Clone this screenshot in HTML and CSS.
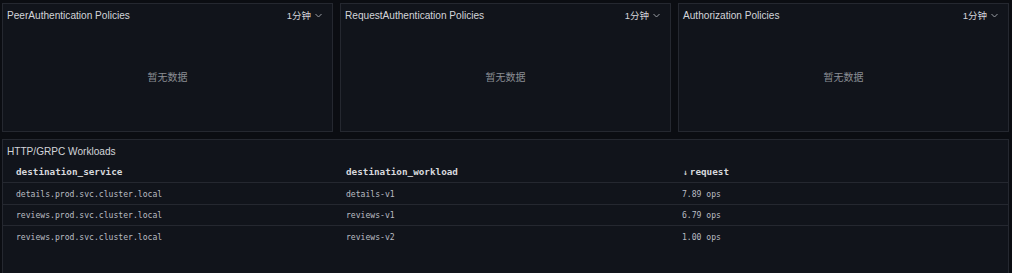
FILE: index.html
```html
<!DOCTYPE html>
<html lang="zh-CN">
<head>
    <meta charset="UTF-8">
    <meta name="viewport" content="width=device-width, initial-scale=1.0">
    <title>Istio Security Dashboard</title>
    <link rel="stylesheet" href="styles.css">
</head>
<body>
    <div class="dashboard">
        <div class="row-policies">
            <div class="panel">
                <div class="panel-head">
                    <span class="panel-title">PeerAuthentication Policies</span>
                    <span class="interval">1分钟
                        <svg class="chevron" width="7" height="5" viewBox="0 0 7 5"><polyline points="0.5,1 3.5,4 6.5,1" fill="none" stroke="currentColor" stroke-width="1"/></svg>
                    </span>
                </div>
                <div class="empty">暂无数据</div>
            </div>
            <div class="panel">
                <div class="panel-head">
                    <span class="panel-title">RequestAuthentication Policies</span>
                    <span class="interval">1分钟
                        <svg class="chevron" width="7" height="5" viewBox="0 0 7 5"><polyline points="0.5,1 3.5,4 6.5,1" fill="none" stroke="currentColor" stroke-width="1"/></svg>
                    </span>
                </div>
                <div class="empty">暂无数据</div>
            </div>
            <div class="panel">
                <div class="panel-head">
                    <span class="panel-title">Authorization Policies</span>
                    <span class="interval">1分钟
                        <svg class="chevron" width="7" height="5" viewBox="0 0 7 5"><polyline points="0.5,1 3.5,4 6.5,1" fill="none" stroke="currentColor" stroke-width="1"/></svg>
                    </span>
                </div>
                <div class="empty">暂无数据</div>
            </div>
        </div>

        <div class="panel panel-wide">
            <div class="panel-head wide-head">
                <span class="panel-title">HTTP/GRPC Workloads</span>
            </div>
            <div class="table">
                <div class="tr th">
                    <div class="td">destination_service</div>
                    <div class="td">destination_workload</div>
                    <div class="td"><span class="sort">&#8595;</span>request</div>
                </div>
                <div class="tr">
                    <div class="td">details.prod.svc.cluster.local</div>
                    <div class="td">details-v1</div>
                    <div class="td">7.89 ops</div>
                </div>
                <div class="tr">
                    <div class="td">reviews.prod.svc.cluster.local</div>
                    <div class="td">reviews-v1</div>
                    <div class="td">6.79 ops</div>
                </div>
                <div class="tr last">
                    <div class="td">reviews.prod.svc.cluster.local</div>
                    <div class="td">reviews-v2</div>
                    <div class="td">1.00 ops</div>
                </div>
            </div>
        </div>
    </div>
</body>
</html>
```

FILE: styles.css
```css
:root {
    --page: #0b0d12;
    --panel: #11141b;
    --border: #252830;
    --text: #d3d5da;
    --muted: #8b8e95;
    --cell: #b9bcc2;
}

* {
    margin: 0;
    padding: 0;
    box-sizing: border-box;
}

body {
    background: var(--page);
    color: var(--text);
    font-family: "Liberation Sans", "Noto Sans CJK SC", sans-serif;
    height: 273px;
    overflow: hidden;
}

.dashboard {
    padding: 3px 3px 0 2px;
}

.row-policies {
    display: grid;
    grid-template-columns: 1fr 1fr 1fr;
    gap: 7px;
    margin-bottom: 7px;
}

.panel {
    background: var(--panel);
    border: 1px solid var(--border);
}

.row-policies .panel {
    height: 129px;
    display: flex;
    flex-direction: column;
}

.panel-head {
    display: flex;
    justify-content: space-between;
    align-items: center;
    padding: 3px 10px 0 4px;
    height: 20px;
}

.panel-title {
    font-size: 10.1px;
    color: var(--text);
}

.interval {
    font-size: 9.5px;
    color: var(--text);
    display: flex;
    align-items: center;
    gap: 4px;
    margin-top: -1px;
}

.chevron {
    color: #9a9da4;
}

.empty {
    flex: 1;
    display: flex;
    align-items: center;
    justify-content: center;
    padding-bottom: 2px;
    font-size: 10px;
    color: var(--muted);
}

.panel-wide {
    height: 140px;
}

.wide-head {
    padding: 3px 4px 0 4px;
    height: 20px;
}

.table {
    font-family: "DejaVu Sans Mono", "Liberation Mono", monospace;
}

.tr {
    display: grid;
    grid-template-columns: 330px 336px 1fr;
    padding: 1px 0 0 13px;
    height: 21.5px;
    align-items: center;
    border-bottom: 1px solid var(--border);
    font-size: 8.1px;
    color: var(--cell);
}

.tr.last {
    border-bottom: none;
}

.th {
    height: 23px;
    padding-top: 0;
    font-size: 9.3px;
    font-weight: bold;
    color: #d7d9dd;
}

.sort {
    font-size: 8px;
    margin-right: 2px;
    margin-left: 1px;
}
```
